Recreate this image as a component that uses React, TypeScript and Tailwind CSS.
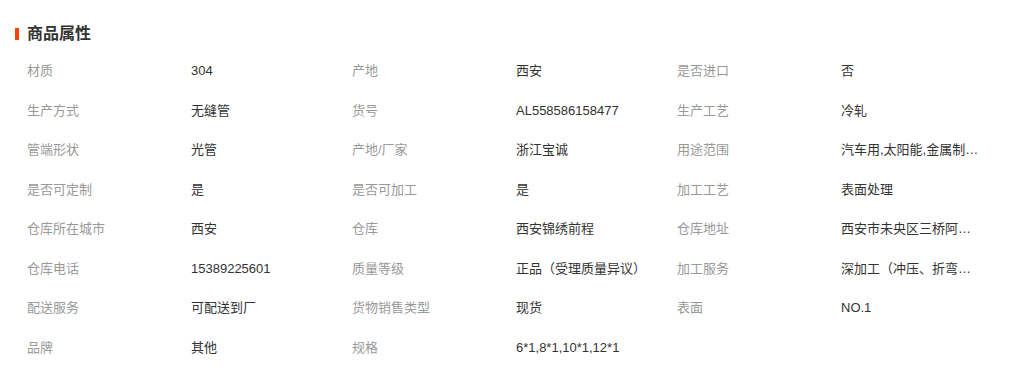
const rows: [string, string][][] = [
  [["材质", "304"], ["产地", "西安"], ["是否进口", "否"]],
  [["生产方式", "无缝管"], ["货号", "AL558586158477"], ["生产工艺", "冷轧"]],
  [["管端形状", "光管"], ["产地/厂家", "浙江宝诚"], ["用途范围", "汽车用,太阳能,金属制品,建筑装饰"]],
  [["是否可定制", "是"], ["是否可加工", "是"], ["加工工艺", "表面处理"]],
  [["仓库所在城市", "西安"], ["仓库", "西安锦绣前程"], ["仓库地址", "西安市未央区三桥阿房路"]],
  [["仓库电话", "15389225601"], ["质量等级", "正品（受理质量异议）"], ["加工服务", "深加工（冲压、折弯、切割）"]],
  [["配送服务", "可配送到厂"], ["货物销售类型", "现货"], ["表面", "NO.1"]],
  [["品牌", "其他"], ["规格", "6*1,8*1,10*1,12*1"]],
];

// one label/value pair inside a row
function Attr({ label, value }: { label: string; value: string }) {
  return (
    <div className="flex w-[325px] items-center">
      <span className="w-[164px] shrink-0 text-[#999]">{label}</span>
      <span className="w-[138px] overflow-hidden text-ellipsis whitespace-nowrap text-[#333]" title={value}>
        {value}
      </span>
    </div>
  );
}

export default function App() {
  return (
    <div
      className="h-[376px] w-[1023px] bg-white pl-[15px] pt-[26px] text-[13px]"
      style={{ fontFamily: '"Liberation Sans", "Noto Sans CJK SC", sans-serif' }}
    >
      <div className="flex h-4 items-center gap-2">
        <span className="h-3 w-1 bg-[#ff4400]" />
        <h2 className="text-[16px] font-bold leading-4 text-[#333]">商品属性</h2>
      </div>
      <div className="mt-[9px] pl-3">
        {rows.map((row, i) => (
          <div key={i} className="flex h-[39.5px] items-center">
            {row.map(([l, v]) => (
              <Attr key={l} label={l} value={v} />
            ))}
          </div>
        ))}
      </div>
    </div>
  );
}
